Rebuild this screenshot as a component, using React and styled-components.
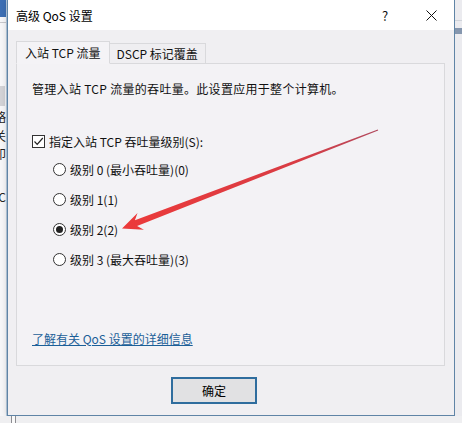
import styled, { createGlobalStyle } from "styled-components";

const GlobalStyle = createGlobalStyle`
  html, body {
    margin: 0;
    padding: 0;
    background: #ececef;
  }
  body {
    font-family: "Noto Sans CJK SC", "Noto Sans", sans-serif;
    font-size: 12px;
    color: #111;
  }
`;

const Desktop = styled.div`
  position: relative;
  width: 462px;
  height: 423px;
  overflow: hidden;
  display: grid;
  grid-template-columns: 7px 448px 1fr;
  grid-template-rows: 416px 1fr;
  background: #ececef;
`;

const LeftStrip = styled.div`
  display: flex;
  flex-direction: column;
  background: #f6f6f8;
  border-right: 1px solid #b9cde0;
  overflow: hidden;
`;

const BlueBlock = styled.div`
  height: 17px;
  background: #3d6fb4;
  border-bottom: 5px solid #f6f6f8;
  box-shadow: 0 1px 0 #c8c8cc;
`;

const GreyBlock = styled.div`
  margin-top: 64px;
  height: 20px;
  width: 5px;
  background: #d2d2d6;
`;

const Fragment = styled.div`
  display: flex;
  justify-content: flex-end;
  width: 6px;
  height: 18px;
  margin-top: ${(p) => p.$top || 0}px;
  overflow: hidden;
  white-space: nowrap;
  line-height: 18px;
  font-size: 12px;
  color: #222;
`;

const RightStrip = styled.div`
  display: flex;
  flex-direction: column;
  background: #ebebef;
  padding-top: 20px;
`;

const RightLine = styled.div`
  height: 1px;
  background: #cfd3da;
`;

const RightBand = styled.div`
  margin-top: 7px;
  height: 6px;
  background: #8596ae;
`;

const BottomStrip = styled.div`
  grid-column: 1 / -1;
  display: flex;
  background: #efeff1;
  padding-left: 11px;
`;

const BottomBar = styled.div`
  width: 3px;
  border-left: 1px solid #8d8d92;
  border-right: 1px solid #8d8d92;
  background: #fafafa;
`;

const Dialog = styled.div`
  display: flex;
  flex-direction: column;
  background: #f0eff2;
  border: 1px solid #5f84a6;
  border-top: none;
  box-shadow: 0 0 6px rgba(0, 0, 0, 0.18);
`;

const TitleBar = styled.div`
  display: flex;
  align-items: center;
  height: 30px;
  background: #ffffff;
  padding-left: 8px;
`;

const Title = styled.div`
  flex: 1;
  font-size: 12px;
  color: #000;
`;

const CaptionButton = styled.div`
  width: 46px;
  height: 30px;
  display: flex;
  align-items: center;
  justify-content: center;
  font-size: 13px;
  color: #111;
`;

const Body = styled.div`
  display: flex;
  flex-direction: column;
  padding: 11px 9px 0 8px;
`;

const TabRow = styled.div`
  display: flex;
  align-items: flex-end;
  height: 23px;
  position: relative;
  z-index: 1;
  margin-bottom: -1px;
`;

const Tab = styled.div`
  height: ${(p) => (p.$active ? 23 : 21)}px;
  box-sizing: border-box;
  padding: 0 ${(p) => (p.$active ? 8 : 7)}px;
  display: flex;
  align-items: center;
  border: 1px solid #d9d9dc;
  border-bottom: ${(p) => (p.$active ? "1px solid #f4f3f6" : "1px solid #d9d9dc")};
  border-left: ${(p) => (p.$active ? "1px solid #d9d9dc" : "none")};
  background: ${(p) => (p.$active ? "#f4f3f6" : "#efeef1")};
  font-size: 12px;
  color: #111;
  white-space: nowrap;
`;

const Panel = styled.div`
  height: 303px;
  box-sizing: border-box;
  border: 1px solid #d9d9dc;
  background: #f3f2f5;
  display: flex;
  flex-direction: column;
  padding: 16px 0 0 15px;
`;

const Description = styled.div`
  line-height: 18px;
  letter-spacing: 0.3px;
`;

const CheckRow = styled.label`
  display: flex;
  align-items: center;
  gap: 4px;
  margin-top: 34px;
  height: 18px;
`;

const Box = styled.span`
  width: 13px;
  height: 13px;
  box-sizing: border-box;
  border: 1px solid #333;
  background: #fff;
  display: flex;
  align-items: center;
  justify-content: center;
`;

const RadioList = styled.div`
  display: flex;
  flex-direction: column;
  gap: 12px;
  margin-top: 10px;
  padding-left: 21px;
`;

const RadioRow = styled.label`
  display: flex;
  align-items: center;
  gap: 4px;
  height: 18px;
`;

const Radio = styled.span`
  width: 13px;
  height: 13px;
  box-sizing: border-box;
  border-radius: 50%;
  border: 1px solid #333;
  background: #fff;
  display: flex;
  align-items: center;
  justify-content: center;
  &::after {
    content: "";
    width: 7px;
    height: 7px;
    border-radius: 50%;
    background: ${(p) => (p.$checked ? "#222" : "transparent")};
  }
`;

const Link = styled.a`
  margin-top: auto;
  margin-bottom: 17px;
  color: #1b5f98;
  text-decoration: underline;
  line-height: 18px;
  align-self: flex-start;
`;

const Footer = styled.div`
  display: flex;
  padding: 11px 0 0 155px;
`;

const Button = styled.button`
  width: 86px;
  height: 27px;
  box-sizing: border-box;
  border: 2px solid #2f6d9e;
  background: #e1e1e3;
  font-family: inherit;
  font-size: 12px;
  color: #000;
  padding: 0;
`;

const ArrowLayer = styled.svg`
  position: absolute;
  left: 0;
  top: 0;
  pointer-events: none;
`;

const levels = [
  "级别 0 (最小吞吐量)(0)",
  "级别 1(1)",
  "级别 2(2)",
  "级别 3 (最大吞吐量)(3)",
];

export default function App() {
  return (
    <>
      <GlobalStyle />
      <Desktop>
        <LeftStrip>
          <BlueBlock />
          <GreyBlock />
          <Fragment $top={2}>策略</Fragment>
          <Fragment $top={1}>相关</Fragment>
          <Fragment>打印</Fragment>
          <Fragment $top={25}>C</Fragment>
        </LeftStrip>

        <Dialog>
          <TitleBar>
            <Title>高级 QoS 设置</Title>
            <CaptionButton>?</CaptionButton>
            <CaptionButton>
              <svg width="11" height="11" viewBox="0 0 11 11">
                <path d="M0.5 0.5 L10.5 10.5 M10.5 0.5 L0.5 10.5" stroke="#111" strokeWidth="1" />
              </svg>
            </CaptionButton>
          </TitleBar>
          <Body>
            <TabRow>
              <Tab $active>入站 TCP 流量</Tab>
              <Tab>DSCP 标记覆盖</Tab>
            </TabRow>
            <Panel>
              <Description>管理入站 TCP 流量的吞吐量。此设置应用于整个计算机。</Description>
              <CheckRow>
                <Box>
                  <svg width="11" height="11" viewBox="0 0 11 11">
                    <path d="M1.5 5.5 L4.2 8.3 L9.8 2" fill="none" stroke="#222" strokeWidth="1.2" />
                  </svg>
                </Box>
                指定入站 TCP 吞吐量级别(S):
              </CheckRow>
              <RadioList>
                {levels.map((text, i) => (
                  <RadioRow key={text}>
                    <Radio $checked={i === 2} />
                    {text}
                  </RadioRow>
                ))}
              </RadioList>
              <Link href="#">了解有关 QoS 设置的详细信息</Link>
            </Panel>
            <Footer>
              <Button>确定</Button>
            </Footer>
          </Body>
        </Dialog>

        <RightStrip>
          <RightLine />
          <RightBand />
        </RightStrip>

        <BottomStrip>
          <BottomBar />
        </BottomStrip>

        <ArrowLayer width="462" height="423" viewBox="0 0 462 423">
          <defs>
            <linearGradient id="arrowFill" x1="378" y1="130" x2="122" y2="228" gradientUnits="userSpaceOnUse">
              <stop offset="0" stopColor="#b14a5e" />
              <stop offset="0.3" stopColor="#d83c44" />
              <stop offset="1" stopColor="#ec3a3a" />
            </linearGradient>
          </defs>
          <polygon
            points="122,228.5 143.9,229.7 137.1,225.9 378.2,130.6 377.8,129.4 134.9,220.3 137.5,212.9"
            fill="url(#arrowFill)"
          />
        </ArrowLayer>
      </Desktop>
    </>
  );
}
